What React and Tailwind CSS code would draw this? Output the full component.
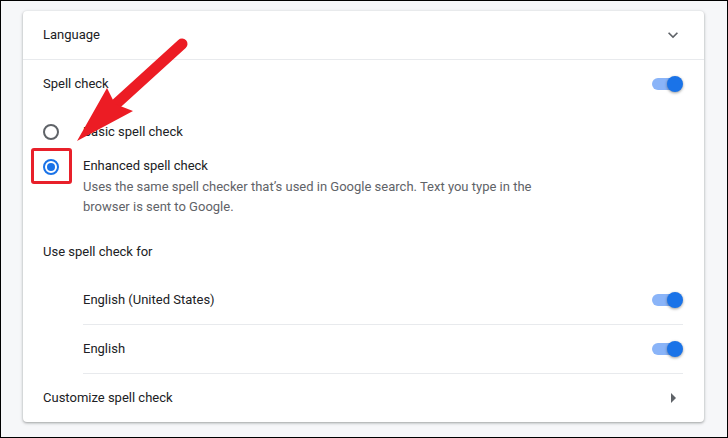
import React from "react";

const Toggle = () => (
  <div className="relative w-[31px] h-[16px] shrink-0">
    <div className="absolute left-0 top-[2px] w-[26px] h-[12px] rounded-full bg-[#8ab4f8]" />
    <div className="absolute right-0 top-0 w-[16px] h-[16px] rounded-full bg-[#1a73e8] shadow-[0_1px_3px_rgba(0,0,0,0.4)]" />
  </div>
);

const Radio = ({ checked }) =>
  checked ? (
    <div className="w-[16px] h-[16px] rounded-full border-2 border-[#1a73e8] flex items-center justify-center shrink-0">
      <div className="w-[8px] h-[8px] rounded-full bg-[#1a73e8]" />
    </div>
  ) : (
    <div className="w-[16px] h-[16px] rounded-full border-2 border-[#5f6368] shrink-0" />
  );

const App = () => {
  return (
    <div
      className="relative w-[728px] h-[438px] border border-black bg-[#f6f7f9] pt-[10px] pl-[22px] text-[13px] text-[#202124]"
      style={{ fontFamily: "Roboto, 'Liberation Sans', sans-serif" }}
    >
      <div className="w-[681px] h-[411px] bg-white rounded-[4px] shadow-[0_1px_2px_rgba(60,64,67,0.3),0_1px_3px_1px_rgba(60,64,67,0.15)]">
        {/* Language header */}
        <div className="h-[49px] flex items-center justify-between pl-[20px] pr-[21px] border-b border-[#e8eaed]">
          <span>Language</span>
          <svg width="20" height="20" viewBox="0 0 24 24" fill="#5f6368">
            <path d="M16.59 8.59L12 13.17 7.41 8.59 6 10l6 6 6-6z" />
          </svg>
        </div>

        {/* Spell check */}
        <div className="h-[48px] flex items-center justify-between pl-[20px] pr-[21px]">
          <span>Spell check</span>
          <Toggle />
        </div>

        {/* Radio group */}
        <div className="pl-[20px] pt-[8px] pb-[11px]">
          <div className="h-[32px] flex items-center gap-[24px]">
            <Radio />
            <span>Basic spell check</span>
          </div>
          <div className="relative flex gap-[24px] mt-[8px]">
            <div className="h-[20px] flex items-center pt-[2px]">
              <Radio checked />
            </div>
            <div className="leading-[20px]">
              <div>Enhanced spell check</div>
              <div className="text-[#5f6368] w-[470px] pt-[1px]">
                Uses the same spell checker that’s used in Google search. Text you type in the browser is sent to Google.
              </div>
            </div>
            <div className="absolute left-[-12px] top-[-8px] w-[41px] h-[36px] border-[3px] border-[#e8202a] rounded-[3px]" />
          </div>
        </div>

        {/* Use spell check for */}
        <div className="h-[48px] flex items-center pl-[20px]">
          <span>Use spell check for</span>
        </div>
        <div className="ml-[60px] mr-[21px]">
          <div className="h-[49px] flex items-center justify-between border-b border-[#e8eaed]">
            <span>English (United States)</span>
            <Toggle />
          </div>
          <div className="h-[49px] flex items-center justify-between border-b border-[#e8eaed]">
            <span>English</span>
            <Toggle />
          </div>
        </div>

        {/* Customize */}
        <div className="h-[48px] flex items-center justify-between pl-[20px] pr-[19px]">
          <span>Customize spell check</span>
          <svg width="24" height="24" viewBox="0 0 24 24" fill="#5f6368">
            <path d="M10 17l5-5-5-5v10z" />
          </svg>
        </div>
      </div>

      {/* Annotation arrow */}
      <svg
        className="absolute left-[-1px] top-[-1px] pointer-events-none"
        width="728"
        height="438"
        viewBox="0 0 728 438"
      >
        <line x1="182" y1="44" x2="116" y2="104" stroke="#ec1c24" strokeWidth="11" strokeLinecap="round" />
        <polygon points="77,141 107,88 115,104 133,111" fill="#ec1c24" />
      </svg>
    </div>
  );
};

export default App;
